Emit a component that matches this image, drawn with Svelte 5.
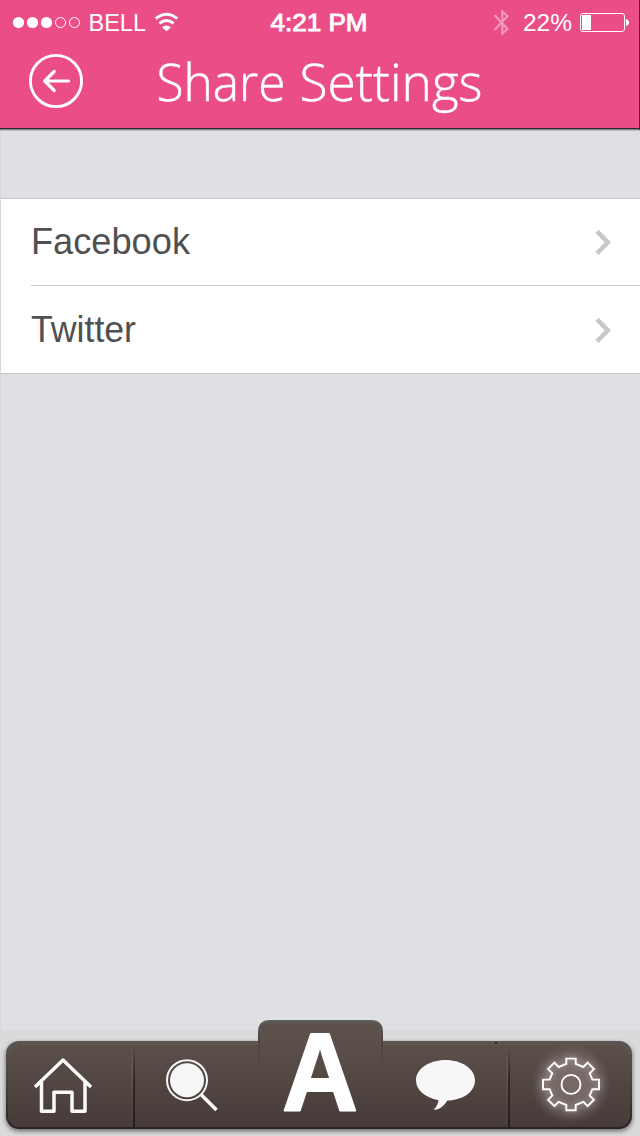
<script>
  const rows = [
    { name: 'Facebook', width: 159 },
    { name: 'Twitter', width: 105 }
  ];
  const quarter = [[-4.7, -25.8], [-4.7, -20.6], [-12.4, -17.4], [-16.6, -21.8], [-23, -15.3], [-18.7, -11.2], [-21.4, -4.8], [-28, -4.8]];
  const flip = (points, sx, sy) => points.map(([x, y]) => [x * sx, y * sy]);
  const back = (points) => [...points].reverse();
  const gear = [
    ...quarter,
    ...back(flip(quarter, 1, -1)),
    ...flip(quarter, -1, -1),
    ...back(flip(quarter, -1, 1))
  ].map((p) => p.join(',')).join(' ');
</script>

<div class="screen">
  <header>
    <div class="status">
      <div class="left">
        <svg width="180" height="44" viewBox="0 0 180 44">
          <g fill="#fff"><circle cx="18.5" cy="22.5" r="5.6" /><circle cx="32.5" cy="22.5" r="5.6" /><circle cx="46.5" cy="22.5" r="5.6" /></g>
          <g fill="none" stroke="#fff"><circle cx="60.5" cy="22.5" r="5" /><circle cx="74.5" cy="22.5" r="5" /></g>
          <text x="88.500" y="31" font-size="24" textLength="57.500" lengthAdjust="spacingAndGlyphs">BELL</text>
          <g fill="none" stroke="#fff" stroke-width="2.9"><path d="M155.700 18.700Q166.500 10 177.300 18.700" /><path d="M159.400 23.400Q166.500 17.600 173.600 23.400" /></g>
          <path d="M162 27.200Q166.500 23.800 171 27.200L166.500 31.200Z" fill="#fff" />
        </svg>
      </div>
      <svg width="120" height="44" viewBox="260 0 120 44">
        <text class="medium" x="270.500" y="31" font-size="24" textLength="97" lengthAdjust="spacingAndGlyphs">4:21 PM</text>
      </svg>
      <svg width="150" height="44" viewBox="490 0 150 44">
        <path d="M494.500 15L507.500 29L502.300 33.500V11.500L507.500 16L494.500 30" fill="none" stroke="#fff" stroke-opacity=".45" stroke-width="2" />
        <text x="523" y="31" font-size="24" textLength="49" lengthAdjust="spacingAndGlyphs">22%</text>
        <rect x="580.500" y="13.500" width="44" height="18" rx="2.500" fill="none" stroke="#fff" />
        <path d="M582 15H591V30H582ZM626 19Q629 20 629 22.500T626 26Z" fill="#fff" />
      </svg>
    </div>
    <div class="title">
      <svg width="640" height="84" viewBox="0 44 640 84">
        <circle cx="56" cy="81" r="25.600" fill="none" stroke="#fff" stroke-width="2.900" />
        <path d="M68.500 81H45M54.200 71.500L44.700 81L54.200 90.500" fill="none" stroke="#fff" stroke-width="3.200" stroke-linecap="round" stroke-linejoin="round" />
        <text class="heading" x="156.500" y="101" font-size="52" textLength="129" lengthAdjust="spacingAndGlyphs">Share</text>
        <text class="heading" x="299.500" y="101" font-size="52" textLength="183" lengthAdjust="spacingAndGlyphs">Settings</text>
      </svg>
    </div>
  </header>

  <main>
    <ul>
      {#each rows as row}
        <li>
          <svg width="200" height="86" viewBox="0 0 200 86">
            <text x="0" y="55" font-size="37" textLength={row.width} lengthAdjust="spacingAndGlyphs">{row.name}</text>
          </svg>
          <svg width="18" height="28" viewBox="0 0 18 28"><path d="M3 3.300L14 14.300L3 25.300" fill="none" stroke="#c7c7cc" stroke-width="4.500" /></svg>
        </li>
      {/each}
    </ul>
  </main>

  <footer>
    <nav>
      <svg width="640" height="126" viewBox="0 1010 640 126">
        <defs>
          <linearGradient id="brown" gradientUnits="userSpaceOnUse" x1="0" y1="1041" x2="0" y2="1128">
            <stop offset="0" stop-color="#5d504b" /><stop offset="1" stop-color="#463b39" />
          </linearGradient>
          <linearGradient id="rim" gradientUnits="userSpaceOnUse" x1="0" y1="1041" x2="0" y2="1128">
            <stop offset="0" stop-color="#565857" /><stop offset=".5" stop-color="#474241" /><stop offset="1" stop-color="#292423" />
          </linearGradient>
          <linearGradient id="fold" x1="0" y1="0" x2="0" y2="1">
            <stop offset="0" stop-color="#302725" stop-opacity="0" /><stop offset=".4" stop-color="#302725" /><stop offset="1" stop-color="#221e1d" />
          </linearGradient>
          <linearGradient id="light" x1="0" y1="0" x2="0" y2="1">
            <stop offset="0" stop-color="#6d5e59" stop-opacity="0" /><stop offset=".3" stop-color="#6d5e59" /><stop offset="1" stop-color="#554845" stop-opacity=".1" />
          </linearGradient>
          <linearGradient id="side" gradientUnits="userSpaceOnUse" x1="0" y1="1020" x2="0" y2="1078">
            <stop offset="0" stop-color="#5c605f" /><stop offset=".4" stop-color="#4a4543" /><stop offset="1" stop-color="#4a4140" stop-opacity="0" />
          </linearGradient>
          <radialGradient id="halo"><stop offset=".35" stop-color="#9b8b87" stop-opacity=".5" /><stop offset=".65" stop-color="#9b8b87" stop-opacity=".38" /><stop offset="1" stop-color="#9b8b87" stop-opacity="0" /></radialGradient>
          <filter id="shade" x="-5%" y="-20%" width="110%" height="150%"><feDropShadow dx="0" dy="2" stdDeviation="2.500" flood-color="#000" flood-opacity=".55" /></filter>
          <filter id="glow" x="-30%" y="-30%" width="160%" height="160%"><feGaussianBlur stdDeviation="3" /></filter>
        </defs>
        <rect x="6" y="1041" width="626" height="88" rx="13" fill="url(#rim)" filter="url(#shade)" />
        <rect x="8" y="1043" width="622" height="84" rx="11" fill="url(#brown)" />
        <path d="M9 1055Q9 1044.500 20 1044.500H619Q629 1044.500 629 1055" fill="none" stroke="#68594f" stroke-opacity=".65" />
        <path d="M495 1042H497V1043.500H495ZM495 1127H497V1128.500H495Z" fill="#191817" />
        <rect x="131.700" y="1046" width="1.300" height="78" fill="url(#light)" /><rect x="133" y="1046" width="2" height="81" fill="url(#fold)" />
        <rect x="506.700" y="1046" width="1.300" height="78" fill="url(#light)" /><rect x="508" y="1046" width="2" height="81" fill="url(#fold)" />
        <path d="M259 1078V1032Q259 1021 270 1021H371Q382 1021 382 1032V1078" fill="url(#brown)" stroke="url(#side)" stroke-width="2" />
        <path d="M261 1034Q261 1023.500 271 1023.500H370Q380 1023.500 380 1034" fill="none" stroke="#68594f" stroke-opacity=".65" />

        <path d="M35 1087L63 1060L91 1087M41.500 1082V1111.200H54V1092.200H72V1111.200H85V1082" fill="none" stroke="#fafafa" stroke-width="3.500" stroke-linejoin="round" />
        <circle cx="187" cy="1080.200" r="20" fill="none" stroke="#f7f7f7" stroke-width="2" />
        <circle cx="187" cy="1080.200" r="17" fill="#f7f7f7" />
        <path d="M201.500 1095L216.500 1110" stroke="#f7f7f7" stroke-width="3.600" />
        <text class="logo" x="320" y="1111" text-anchor="middle" font-size="111" textLength="76" lengthAdjust="spacingAndGlyphs">A</text>
        <path d="M438.500 1100.200C425 1097.500 416 1090 416 1080.200C416 1069 429 1060 445.500 1060S475 1069 475 1080.200C475 1092 463 1100 447.500 1100.600C444.500 1105 439.500 1110.500 433.500 1109.800C436.500 1107 438 1103.500 438.500 1100.200Z" fill="#f7f7f7" />
        <circle cx="571" cy="1084" r="40" fill="url(#halo)" />
        <g transform="translate(571 1084.400)" fill="none" stroke="#fff">
          <polygon points={gear} stroke-width="3" stroke-opacity=".35" filter="url(#glow)" />
          <polygon points={gear} stroke-width="1.900" />
          <circle r="9.500" stroke-width="1.900" />
        </g>
      </svg>
    </nav>
  </footer>
</div>

<style>
  :global(body) { margin: 0; }
  .screen { display: flex; flex-direction: column; width: 640px; height: 1136px; overflow: hidden; background: linear-gradient(#dee0e4, #dee0e4) 0 0 / 100% 1030px no-repeat #dadada; font-family: "Liberation Sans", Arial, sans-serif; }
  svg { display: block; flex: none; }
  header { box-sizing: border-box; height: 131px; background: #eb4d87; border-bottom: 1px solid #b9babc; box-shadow: inset -1px 0 #442832, inset 0 -1px #878889, inset 0 -2px #27272a; }
  .status { display: flex; justify-content: space-between; height: 44px; }
  .left { width: 260px; }
  .status svg + svg { margin-left: auto; }
  .title { display: flex; }
  header text { fill: #fff; }
  .medium { stroke: #fff; stroke-width: .9px; }
  .heading { font-family: "Open Sans", sans-serif; font-weight: 300; stroke: #fff; stroke-width: .5px; }
  .logo { fill: #fff; stroke: #fff; stroke-width: 2px; stroke-linejoin: round; font-weight: bold; }
  main { box-sizing: border-box; height: 899px; padding-top: 67px; border-left: 1px solid #d8d8da; }
  ul { list-style: none; margin: 0; padding: 0 0 0 30px; background: #fff; border-top: 1px solid #c8c7cc; border-bottom: 1px solid #c8c7cc; }
  li { display: flex; align-items: center; justify-content: space-between; height: 86px; padding-right: 28px; }
  li + li { height: 87px; border-top: 1px solid #c8c7cc; }
  li text { fill: #505050; }
  footer { display: flex; height: 106px; }
  nav { margin-top: -20px; }
</style>
